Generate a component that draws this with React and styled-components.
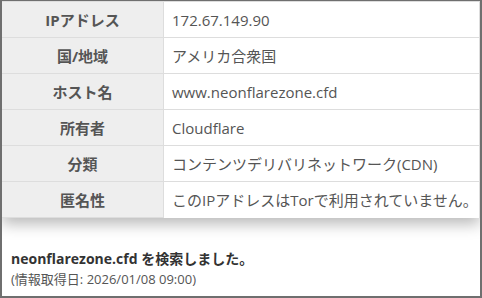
import React from "react";
import styled, { createGlobalStyle } from "styled-components";

const Global = createGlobalStyle`
  html, body { margin: 0; padding: 0; background: #fff; }
  body { font-family: "Open Sans", "Noto Sans CJK JP", sans-serif; }
`;

const Frame = styled.div`
  width: 482px;
  height: 298px;
  box-sizing: border-box;
  border: 2px solid #6f6f6f;
  border-top-width: 1px;
  background: #fff;
  overflow: hidden;
  display: flex;
  flex-direction: column;
`;

const Table = styled.div`
  display: grid;
  grid-template-columns: 162px 1fr;
  border-top: 1px solid #dddddd;
  border-right: 1px solid #dddddd;
  box-shadow: 0 6px 14px rgba(0, 0, 0, 0.28);
  position: relative;
  z-index: 1;
`;

const Label = styled.div`
  height: 35px;
  border-bottom: 1px solid #dddddd;
  border-right: 1px solid #dddddd;
  background: #eeeeee;
  color: #555;
  font-weight: 700;
  font-size: 15px;
  display: flex;
  align-items: center;
  justify-content: center;
`;

const Value = styled.div`
  height: 35px;
  border-bottom: ${(p) => (p.$last ? "none" : "1px solid #dddddd")};
  background: #fff;
  color: #555;
  font-size: 15px;
  display: flex;
  align-items: center;
  padding-left: 8px;
  white-space: nowrap;
`;

const Footer = styled.div`
  padding: 30px 0 0 9px;
  display: flex;
  flex-direction: column;
  gap: 1px;
`;

const Searched = styled.div`
  font-size: 14px;
  font-weight: 700;
  color: #333;
`;

const Fetched = styled.div`
  font-size: 13px;
  color: #555;
`;

const rows = [
  ["IPアドレス", "172.67.149.90"],
  ["国/地域", "アメリカ合衆国"],
  ["ホスト名", "www.neonflarezone.cfd"],
  ["所有者", "Cloudflare"],
  ["分類", "コンテンツデリバリネットワーク(CDN)"],
  ["匿名性", "このIPアドレスはTorで利用されていません。"],
];

export default function App() {
  return (
    <>
      <Global />
      <Frame>
        <Table>
          {rows.map(([k, v], i) => (
            <React.Fragment key={k}>
              <Label>{k}</Label>
              <Value $last={i === rows.length - 1}>{v}</Value>
            </React.Fragment>
          ))}
        </Table>
        <Footer>
          <Searched>neonflarezone.cfd を検索しました。</Searched>
          <Fetched>(情報取得日: 2026/01/08 09:00)</Fetched>
        </Footer>
      </Frame>
    </>
  );
}
